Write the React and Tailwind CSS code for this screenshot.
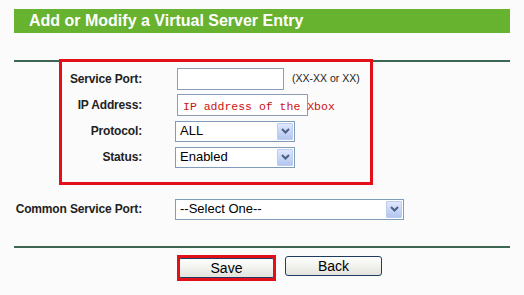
import React from 'react';

const Chevron = () => (
    <svg width="9" height="6" viewBox="0 0 9 6">
        <polyline points="1,1 4.5,4.5 8,1" fill="none" stroke="#4d5f86" strokeWidth="2" />
    </svg>
);

const Select = ({ value, width }) => (
    <div
        className={`relative h-[21px] border border-[#7f9db9] bg-white flex items-center pl-[4px] text-[13px] text-black ${width}`}
    >
        <span>{value}</span>
        <div className="absolute right-[1px] top-[1px] bottom-[1px] w-[16px] flex items-center justify-center rounded-[1px] border border-[#bccbee] bg-gradient-to-b from-[#dfe8fc] to-[#b3c6f1]">
            <Chevron />
        </div>
    </div>
);

const Label = ({ children }) => (
    <div className="text-right text-[12px] font-bold text-[#222] whitespace-nowrap tracking-[-0.15px]">{children}</div>
);

const App = () => {
    return (
        <div className="w-[524px] h-[295px] bg-[#fbfbfb] pt-[9px] px-[14px] font-['Liberation_Sans',Arial,sans-serif]">
            {/* Header */}
            <div className="h-[24px] bg-[#67b22f] pl-[15px] flex items-center text-white text-[16px] font-bold">
                Add or Modify a Virtual Server Entry
            </div>

            {/* Form */}
            <div className="relative mt-[27px]">
                <div className="h-[2px] bg-[#3d6655]" />

                <div className="mt-[4px] grid grid-cols-[128px_1fr] gap-x-[33px]">
                    <div className="h-[26px] flex items-center justify-end"><Label>Service Port:</Label></div>
                    <div className="h-[26px] flex items-center">
                        <div className="ml-[2px] w-[107px] h-[22px] border border-[#8a9db3] bg-white" />
                        <span className="ml-[8px] text-[10.5px] text-[#222]">(XX-XX or XX)</span>
                    </div>

                    <div className="h-[26px] flex items-center justify-end"><Label>IP Address:</Label></div>
                    <div className="h-[26px] flex items-center">
                        <div className="ml-[2px] w-[131px] h-[22px] border border-[#8a9db3] bg-white flex items-center pl-[5px] pt-[3px] whitespace-nowrap overflow-visible">
                            <span className="text-[11.5px] text-[#cc1111] font-['Liberation_Mono',monospace]">IP address of the Xbox</span>
                        </div>
                    </div>

                    <div className="h-[26px] flex items-center justify-end"><Label>Protocol:</Label></div>
                    <div className="h-[26px] flex items-center">
                        <Select value="ALL" width="w-[120px]" />
                    </div>

                    <div className="h-[26px] flex items-center justify-end"><Label>Status:</Label></div>
                    <div className="h-[26px] flex items-center">
                        <Select value="Enabled" width="w-[120px]" />
                    </div>

                    <div className="mt-[26px] h-[26px] flex items-center justify-end"><Label>Common Service Port:</Label></div>
                    <div className="mt-[26px] h-[26px] flex items-center">
                        <Select value="--Select One--" width="w-[229px]" />
                    </div>
                </div>

                {/* highlight */}
                <div className="absolute left-[45px] top-[-1px] w-[314px] h-[126px] border-[3px] border-[#e3101a]" />
            </div>

            <div className="mt-[24px] h-[2px] bg-[#3d6655]" />

            {/* Buttons */}
            <div className="mt-[8px] pl-[164px] flex gap-[10px]">
                <div className="relative">
                    <button className="w-[97px] h-[20px] rounded-[3px] border border-[#1f3d63] bg-gradient-to-b from-white to-[#e4e3dc] text-[14px] text-black leading-none">
                        Save
                    </button>
                    <div className="absolute -left-[1px] -top-[1px] -right-[1px] -bottom-[1px] border-[3px] border-[#e3101a]" />
                </div>
                <button className="w-[97px] h-[20px] rounded-[3px] border border-[#1f3d63] bg-gradient-to-b from-white to-[#e4e3dc] text-[14px] text-black leading-none">
                    Back
                </button>
            </div>
        </div>
    );
};

export default App;
